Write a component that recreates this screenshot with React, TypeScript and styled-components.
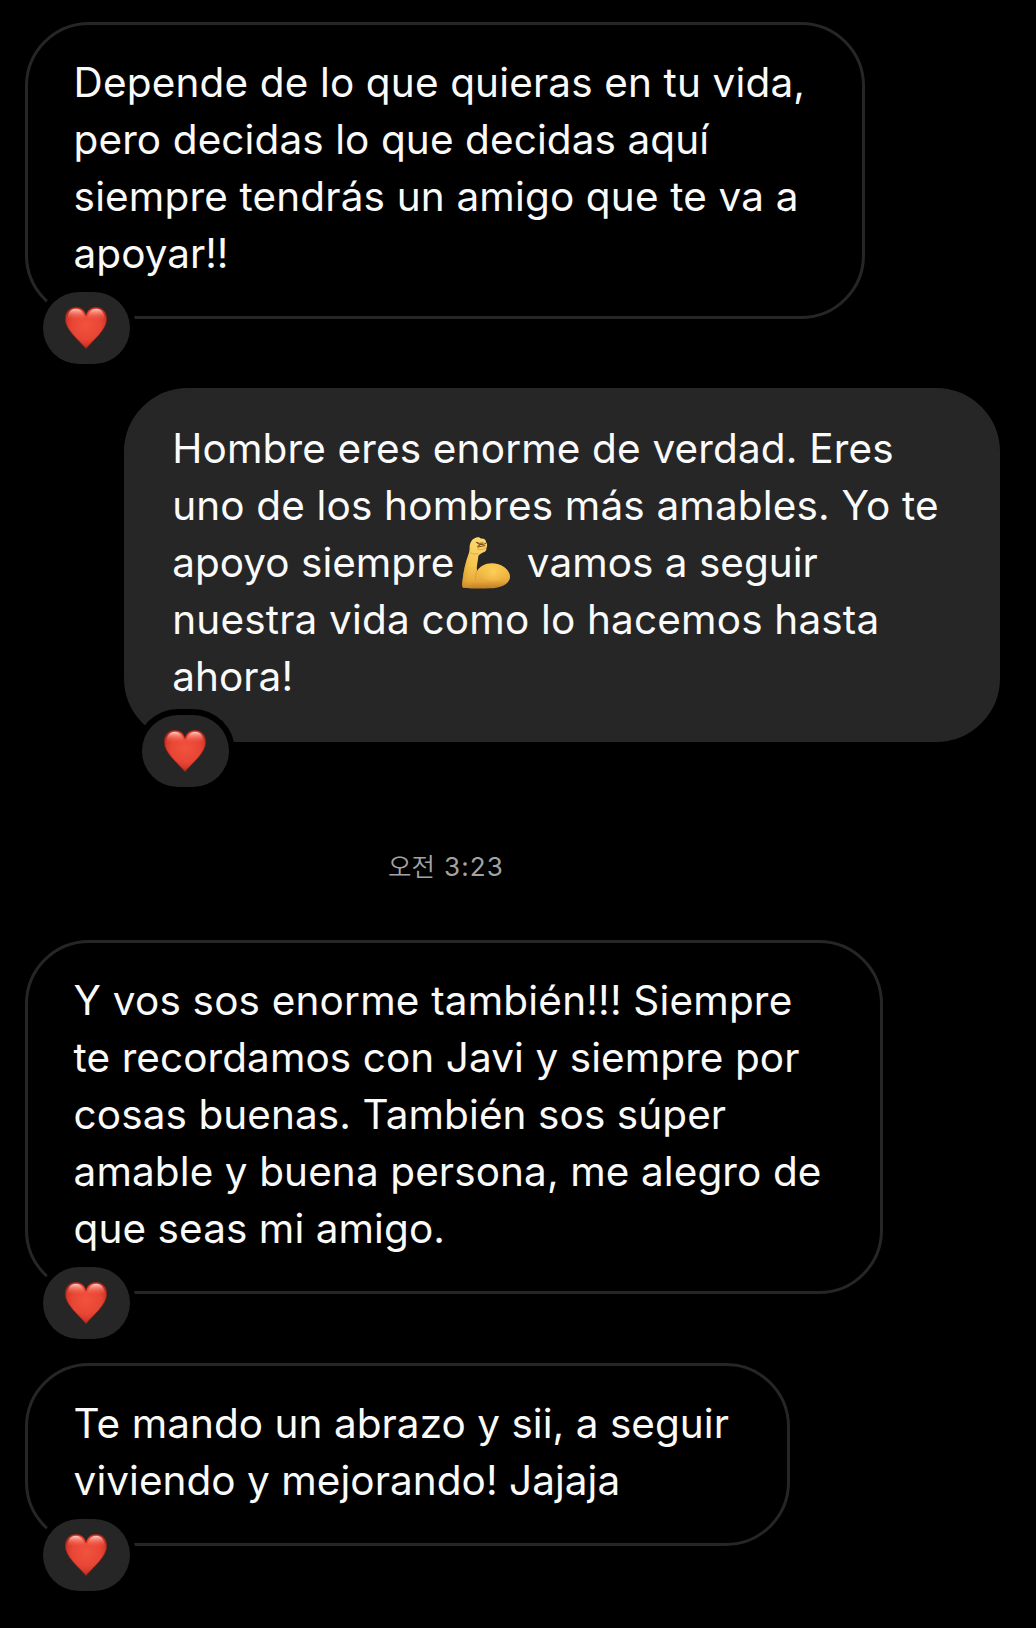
import React from "react";
import styled, { createGlobalStyle, css } from "styled-components";

const surface = "#262626";
const canvas = "#000000";
const textColor = "#fafafa";

const GlobalStyle = createGlobalStyle`
  body {
    margin: 0;
    background: ${canvas};
  }
`;

const Chat = styled.main`
  box-sizing: border-box;
  width: 1036px;
  height: 1628px;
  padding: 22px 36px 0 25px;
  display: flex;
  flex-direction: column;
  overflow: hidden;
  background: ${canvas};
  color: ${textColor};
  font-family: Inter, "Noto Sans CJK KR", sans-serif;
`;

const Thread = styled.section`
  display: flex;
  flex-direction: column;
  gap: 69px;
`;

const Bubble = styled.article<{ $sent?: boolean; $width: number }>`
  position: relative;
  box-sizing: border-box;
  width: ${(p) => p.$width}px;
  padding: 29px 20px 34px 45.6px;
  border: 3px solid ${surface};
  border-radius: 64px;
  align-self: flex-start;
  ${(p) =>
    p.$sent &&
    css`
      align-self: flex-end;
      padding-left: 45.2px;
      background: ${surface};
    `}
`;

const Line = styled.div<{ $tracking: number }>`
  height: 57px;
  line-height: 57px;
  font-size: 40.5px;
  letter-spacing: ${(p) => p.$tracking}px;
  white-space: pre;
`;

const Reaction = styled.div`
  position: absolute;
  left: 15px;
  bottom: -48px;
  width: 87px;
  height: 72px;
  display: flex;
  align-items: center;
  justify-content: center;
  border-radius: 36px;
  background: ${surface};
  box-shadow: 0 0 0 6px ${canvas};
`;

const HeartIcon = styled.svg`
  display: block;
  width: 44px;
  height: 44px;
  margin-right: 1px;
`;

const ArmIcon = styled.svg`
  display: inline-block;
  width: 52px;
  height: 54px;
  margin: 0 3px 0 6px;
  vertical-align: -12.5px;
`;

const Timestamp = styled.time`
  display: flex;
  align-items: baseline;
  height: 36px;
  line-height: 36px;
  margin: 105px 0 57px 363px;
  color: #a3a3a3;
`;

const Period = styled.span`
  font-family: "Noto Sans CJK KR", sans-serif;
  font-size: 25.5px;
  font-weight: 350;
  width: 56px;
`;

const Clock = styled.span`
  font-size: 26px;
  letter-spacing: 1.1px;
`;

function Heart({ id }: { id: string }) {
  const outline =
    "M169 137C164 119 151 113 138 113C119 113 107 128 107 148C107 181 146 210 169 237C192 210 231 181 231 148C231 128 219 113 200 113C187 113 174 119 169 137Z";
  return (
    <HeartIcon viewBox="103 109 132 132" aria-label="corazón">
      <defs>
        <radialGradient id={`${id}-body`} gradientUnits="userSpaceOnUse" cx="170" cy="166" r="74">
          <stop offset="0" stopColor="#f0533e" />
          <stop offset="0.58" stopColor="#e94635" />
          <stop offset="0.8" stopColor="#d4382a" />
          <stop offset="1" stopColor="#98251c" />
        </radialGradient>
        <linearGradient id={`${id}-shine`} x1="0" y1="0" x2="0" y2="1">
          <stop offset="0" stopColor="#ffe3dc" stopOpacity="0.9" />
          <stop offset="0.4" stopColor="#ff9d8c" stopOpacity="0.6" />
          <stop offset="1" stopColor="#f2553f" stopOpacity="0" />
        </linearGradient>
      </defs>
      <path d={outline} fill={`url(#${id}-body)`} stroke="#8c2119" strokeOpacity="0.7" strokeWidth="3" />
      <path
        d="M138 117C123 117 114 128 113 149C122 152 150 152 165 146C162 126 151 117 138 117Z"
        fill={`url(#${id}-shine)`}
      />
      <path
        d="M200 117C215 117 224 128 225 149C216 152 188 152 173 146C176 126 187 117 200 117Z"
        fill={`url(#${id}-shine)`}
      />
    </HeartIcon>
  );
}

function Arm() {
  const outline =
    "M104 53C111 48 119 50 123 54C132 53 138 58 138 64C143 70 142 77 139 83C141 90 134 95 126 97C121 101 116 102 115 107C114 122 109 137 111 151C119 138 135 128 155 128C183 128 210 147 210 168C210 189 183 203 148 203C119 205 92 203 69 201C66 198 66 192 67 184C70 155 76 125 86 99C89 91 89 81 89 75C91 65 96 56 104 53Z";
  return (
    <ArmIcon viewBox="60 46 156 162" aria-label="bíceps">
      <defs>
        <linearGradient id="arm-skin" x1="0" y1="0" x2="0" y2="1">
          <stop offset="0" stopColor="#fbd872" />
          <stop offset="0.55" stopColor="#f6c64e" />
          <stop offset="0.85" stopColor="#e8aa3c" />
          <stop offset="1" stopColor="#bf7c22" />
        </linearGradient>
        <linearGradient id="arm-side" x1="0" y1="0" x2="1" y2="0">
          <stop offset="0" stopColor="#d08c28" stopOpacity="0.6" />
          <stop offset="0.2" stopColor="#f3b940" stopOpacity="0" />
        </linearGradient>
        <radialGradient id="arm-bicep" gradientUnits="userSpaceOnUse" cx="160" cy="152" r="48">
          <stop offset="0" stopColor="#fcd05a" />
          <stop offset="1" stopColor="#f5bd43" stopOpacity="0" />
        </radialGradient>
      </defs>
      <path d={outline} fill="url(#arm-skin)" />
      <path d={outline} fill="url(#arm-side)" />
      <ellipse cx="160" cy="156" rx="44" ry="25" fill="url(#arm-bicep)" />
      <path d="M111 151C107 160 105 169 108 180" fill="none" stroke="#d39134" strokeWidth="2" strokeLinecap="round" />
      <path d="M91 96C99 101 107 101 115 99" fill="none" stroke="#d59531" strokeWidth="2" />
      <path
        d="M109 65L118 68L129 67M112 67L119 72L131 71L137 68M113 77L120 73M114 79L124 77L135 75"
        fill="none"
        stroke="#6d3f12"
        strokeWidth="2.8"
        strokeLinejoin="round"
        strokeLinecap="round"
      />
      <path d="M111 84C120 88 130 87 138 82" fill="none" stroke="#cf8f2e" strokeWidth="2" />
    </ArmIcon>
  );
}

type TextLine = { tracking: number; content: React.ReactNode };

type MessageProps = { id: string; width: number; sent?: boolean; lines: TextLine[] };

function Message({ id, width, sent, lines }: MessageProps) {
  return (
    <Bubble $width={width} $sent={sent}>
      {lines.map((line, i) => (
        <Line key={i} $tracking={line.tracking}>
          {line.content}
        </Line>
      ))}
      <Reaction>
        <Heart id={id} />
      </Reaction>
    </Bubble>
  );
}

const earlier: MessageProps[] = [
  {
    id: "apoyo",
    width: 840,
    lines: [
      { tracking: 0.143, content: "Depende de lo que quieras en tu vida," },
      { tracking: 0.097, content: "pero decidas lo que decidas aquí" },
      { tracking: 0.155, content: "siempre tendrás un amigo que te va a" },
      { tracking: 0, content: "apoyar!!" },
    ],
  },
  {
    id: "hombre",
    width: 876,
    sent: true,
    lines: [
      { tracking: 0.155, content: "Hombre eres enorme de verdad. Eres" },
      { tracking: 0.155, content: "uno de los hombres más amables. Yo te" },
      {
        tracking: 0.02,
        content: (
          <>
            apoyo siempre
            <Arm /> vamos a seguir
          </>
        ),
      },
      { tracking: 0.175, content: "nuestra vida como lo hacemos hasta" },
      { tracking: 0.048, content: "ahora!" },
    ],
  },
];

const later: MessageProps[] = [
  {
    id: "enorme",
    width: 858,
    lines: [
      { tracking: 0.18, content: "Y vos sos enorme también!!! Siempre" },
      { tracking: 0.075, content: "te recordamos con Javi y siempre por" },
      { tracking: 0.08, content: "cosas buenas. También sos súper" },
      { tracking: 0.1, content: "amable y buena persona, me alegro de" },
      { tracking: 0.07, content: "que seas mi amigo." },
    ],
  },
  {
    id: "abrazo",
    width: 765,
    lines: [
      { tracking: 0.04, content: "Te mando un abrazo y sii, a seguir" },
      { tracking: 0.04, content: "viviendo y mejorando! Jajaja" },
    ],
  },
];

export default function App() {
  return (
    <>
      <GlobalStyle />
      <Chat>
        <Thread>
          {earlier.map((m) => (
            <Message key={m.id} {...m} />
          ))}
        </Thread>
        <Timestamp>
          <Period>오전</Period>
          <Clock>3:23</Clock>
        </Timestamp>
        <Thread>
          {later.map((m) => (
            <Message key={m.id} {...m} />
          ))}
        </Thread>
      </Chat>
    </>
  );
}
